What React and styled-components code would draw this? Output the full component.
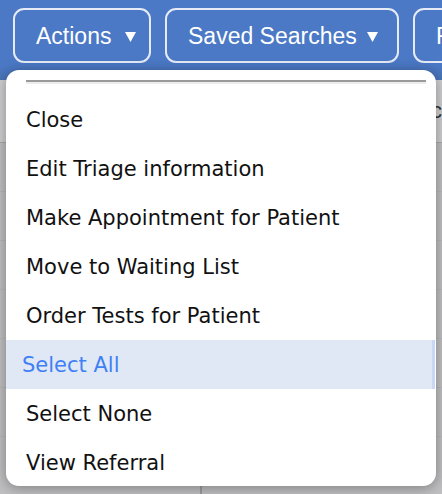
import React from "react";
import styled, { createGlobalStyle } from "styled-components";

const GlobalStyle = createGlobalStyle`
  html, body {
    margin: 0;
    padding: 0;
    background: #c2c2c4;
    overflow: hidden;
  }
`;

const Page = styled.div`
  position: relative;
  width: 442px;
  height: 494px;
  overflow: hidden;
  background: #c0c0c2;
`;

const Toolbar = styled.div`
  height: 80px;
  box-sizing: border-box;
  padding: 8px 0 0 13px;
  display: flex;
  align-items: flex-start;
  gap: 14px;
  background: linear-gradient(#4b79c6 0%, #4b79c6 80%, #4a74b8 100%);
  white-space: nowrap;
`;

const ToolButton = styled.button`
  flex: none;
  width: ${(p) => p.$w}px;
  height: 55px;
  box-sizing: border-box;
  padding: 2px 0 0 21px;
  display: flex;
  align-items: center;
  gap: ${(p) => p.$gap}px;
  background: transparent;
  border: 2px solid #e6ecf7;
  border-radius: 11px;
  color: #ffffff;
  font-family: "Liberation Sans", Arial, sans-serif;
  font-size: 23px;
  cursor: pointer;
`;

const Caret = () => (
  <svg width="13" height="13" viewBox="0 0 13 13">
    <path d="M1 2 H12 L6.5 12 Z" fill="#ffffff" />
  </svg>
);

const HeaderRow = styled.div`
  height: 62px;
  border-bottom: 1px solid #a9a9ab;
  background: #cfcfd1;
  display: flex;
  align-items: center;
  justify-content: flex-end;
  font-family: "Liberation Sans", Arial, sans-serif;
  font-size: 22px;
  color: #333;
  overflow: hidden;
`;

const BodyRow = styled.div`
  height: 48px;
  border-bottom: 1px solid #b8b8ba;
`;

const LastRow = styled.div`
  height: 60px;
  display: grid;
  grid-template-columns: 202px 1fr;
`;

const Cell = styled.div`
  border-right: 2px solid #9c9c9e;
`;

const Menu = styled.div`
  position: absolute;
  left: 6px;
  top: 70px;
  width: 430px;
  height: 416px;
  box-sizing: border-box;
  padding-top: 10px;
  background: #ffffff;
  border-radius: 13px;
  box-shadow: 0 2px 14px rgba(0, 0, 0, 0.35);
  overflow: hidden;
  font-family: "DejaVu Sans", Verdana, sans-serif;
`;

const Separator = styled.div`
  margin: 0 10px 11px 20px;
  height: 2px;
  background: #9a9a9a;
  border-bottom: 2px solid #ededed;
`;

const Item = styled.div`
  height: 49px;
  display: flex;
  align-items: center;
  padding: 0 0 0 ${(p) => (p.$active ? 16 : 20)}px;
  font-size: 21px;
  color: ${(p) => (p.$active ? "#3f80f4" : "#111111")};
  background: ${(p) => (p.$active ? "#e1e8f5" : "transparent")};
  border-right: 3px solid ${(p) => (p.$active ? "#c9d8f5" : "transparent")};
  box-sizing: border-box;
  margin-right: 1px;
  white-space: nowrap;
`;

const items = [
  "Close",
  "Edit Triage information",
  "Make Appointment for Patient",
  "Move to Waiting List",
  "Order Tests for Patient",
  "Select All",
  "Select None",
  "View Referral",
];

export default function App() {
  return (
    <Page>
      <GlobalStyle />
      <Toolbar>
        <ToolButton $w={138} $gap={13}>
          Actions <Caret />
        </ToolButton>
        <ToolButton $w={234} $gap={9}>
          Saved Searches <Caret />
        </ToolButton>
        <ToolButton $w={80} $gap={9}>
          F
        </ToolButton>
      </Toolbar>
      <HeaderRow>nc</HeaderRow>
      <BodyRow />
      <BodyRow />
      <BodyRow />
      <BodyRow />
      <BodyRow />
      <BodyRow />
      <LastRow>
        <Cell />
        <div />
      </LastRow>
      <Menu>
        <Separator />
        {items.map((label) => (
          <Item key={label} $active={label === "Select All"}>
            {label}
          </Item>
        ))}
      </Menu>
    </Page>
  );
}
